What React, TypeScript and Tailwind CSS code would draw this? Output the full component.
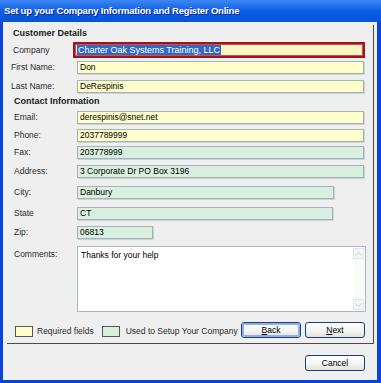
import React from 'react';

const yellow = 'bg-[#ffffcc]';
const green = 'bg-[#d9efdf]';

function Field({ label, width, color, value, mt, labelPl = 'pl-[7px]' }: { label: string; width: string; color: string; value: string; mt: string; labelPl?: string }) {
  return (
    <div className={`flex items-center h-[13px] ${mt}`}>
      <div className={`w-[70px] shrink-0 ${labelPl} text-[8.5px] text-[#2b2b2b] leading-none`}>{label}</div>
      <div className={`${width} h-[13px] ${color} border border-[#a3b4b8] shadow-[1px_1px_0_#c9d2d4] flex items-center pl-[2px] text-[8.5px] text-black leading-none`}>
        {value}
      </div>
    </div>
  );
}

function XpButton({ children, focused = false, className = '' }: { children: React.ReactNode; focused?: boolean; className?: string }) {
  return (
    <div className={`w-[60px] h-[16px] rounded-[3px] border border-[#1f3f72] bg-gradient-to-b from-white via-[#f6f6f3] to-[#e3e3de] flex items-center justify-center text-[8.5px] text-black leading-none ${className}`}>
      <div className={`w-full h-full rounded-[2px] flex items-center justify-center ${focused ? 'border-2 border-[#8cb0ee]' : 'border border-transparent'}`}>
        {children}
      </div>
    </div>
  );
}

export default function App() {
  return (
    <div className="w-[381px] h-[383px] flex flex-col bg-[#0844d6] font-['Liberation_Sans',Arial,sans-serif]">
      {/* title bar */}
      <div className="h-[22px] shrink-0 bg-gradient-to-b from-[#3d87f6] via-[#0b5ee2] to-[#0653d8] flex items-center pl-[4px]">
        <span className="text-white font-bold text-[9.5px] tracking-[-0.2px] [text-shadow:1px_1px_0_#0a2a86]">
          Set up your Company Information and Register Online
        </span>
      </div>

      {/* window body */}
      <div className="flex-1 ml-[3px] mr-[4px] mb-[3px] bg-[#efefef] flex flex-col">
        {/* group panel */}
        <div className="mt-[3px] ml-[4px] mr-[3px] h-[319px] border-r border-b border-[#4a4a4a] flex flex-col">
          <div className="h-[12px] mt-[2px] pl-[6px] flex items-center text-[9px] font-bold text-[#1a1a1a] leading-none">
            Customer Details
          </div>

          {/* company */}
          <div className="flex items-center h-[16px] mt-[3px]">
            <div className="w-[66px] shrink-0 pl-[6px] text-[8.5px] text-[#2b2b2b] leading-none">Company</div>
            <div className="w-[292px] h-[16px] bg-[#fbf5c4] border-[2px] border-[#a01519] outline outline-1 -outline-offset-3 outline-[#d94b4b] flex items-center pl-[2px]">
              <span className="bg-[#316ac5] text-white text-[9px] leading-[10px] px-[1px]">Charter Oak Systems Training, LLC</span>
            </div>
          </div>

          <Field label="First Name:" width="w-[287px]" color={yellow} value="Don" mt="mt-[3px]" labelPl="pl-[4px]" />
          <Field label="Last Name:" width="w-[287px]" color={yellow} value="DeRespinis" mt="mt-[6px]" labelPl="pl-[4px]" />

          <div className="h-[12px] mt-[2px] pl-[7px] flex items-center text-[9px] font-bold text-[#1a1a1a] leading-none">
            Contact Information
          </div>

          <Field label="Email:" width="w-[287px]" color={yellow} value="derespinis@snet.net" mt="mt-[4px]" />
          <Field label="Phone:" width="w-[287px]" color={yellow} value="2037789999" mt="mt-[5px]" />
          <Field label="Fax:" width="w-[287px]" color={green} value="203778999" mt="mt-[4px]" />
          <Field label="Address:" width="w-[287px]" color={green} value="3 Corporate Dr PO Box 3196" mt="mt-[6px]" />
          <Field label="City:" width="w-[257px]" color={green} value="Danbury" mt="mt-[8px]" />
          <Field label="State" width="w-[256px]" color={green} value="CT" mt="mt-[8px]" />
          <Field label="Zip:" width="w-[76px]" color={green} value="06813" mt="mt-[6px]" />

          {/* comments */}
          <div className="flex mt-[7px] h-[66px]">
            <div className="w-[70px] shrink-0 pl-[7px] pt-[3px] text-[8.5px] text-[#2b2b2b] leading-[11px]">Comments:</div>
            <div className="w-[289px] h-[66px] bg-white border border-[#a7b6c6] flex">
              <div className="flex-1 pl-[3px] pt-[3px] text-[8.5px] leading-[11px] text-black">Thanks for your help</div>
              <div className="w-[11px] my-[1px] mr-[1px] flex flex-col bg-[#fafaf7]">
                <div className="h-[11px] border border-[#dfe5ee] rounded-[1px] bg-[#f4f6f9] flex items-center justify-center">
                  <svg width="7" height="4" viewBox="0 0 7 4"><path d="M0.5 3.5 L3.5 0.5 L6.5 3.5" fill="none" stroke="#c3cbd6" strokeWidth="1" /></svg>
                </div>
                <div className="flex-1" />
                <div className="h-[11px] border border-[#dfe5ee] rounded-[1px] bg-[#f4f6f9] flex items-center justify-center">
                  <svg width="7" height="4" viewBox="0 0 7 4"><path d="M0.5 0.5 L3.5 3.5 L6.5 0.5" fill="none" stroke="#c3cbd6" strokeWidth="1" /></svg>
                </div>
              </div>
            </div>
          </div>

          {/* legend + nav */}
          <div className="flex items-center h-[16px] mt-[10px] pl-[8px] pr-[8px]">
            <div className={`w-[18px] h-[11px] mt-[3px] ${yellow} border border-[#555]`} />
            <span className="ml-[4px] mt-[2px] text-[8.5px] text-[#2b2b2b] leading-none">Required fields</span>
            <div className={`ml-[8px] w-[18px] h-[11px] mt-[3px] ${green} border border-[#555]`} />
            <span className="ml-[6px] mt-[2px] text-[8.5px] text-[#2b2b2b] leading-none">Used to Setup Your Company</span>
            <div className="ml-auto flex gap-[4px]">
              <XpButton focused><span><span className="underline">B</span>ack</span></XpButton>
              <XpButton><span><span className="underline">N</span>ext</span></XpButton>
            </div>
          </div>
        </div>

        {/* bottom */}
        <div className="flex justify-end mt-[11px] mr-[12px]">
          <XpButton>Cancel</XpButton>
        </div>
      </div>
    </div>
  );
}
